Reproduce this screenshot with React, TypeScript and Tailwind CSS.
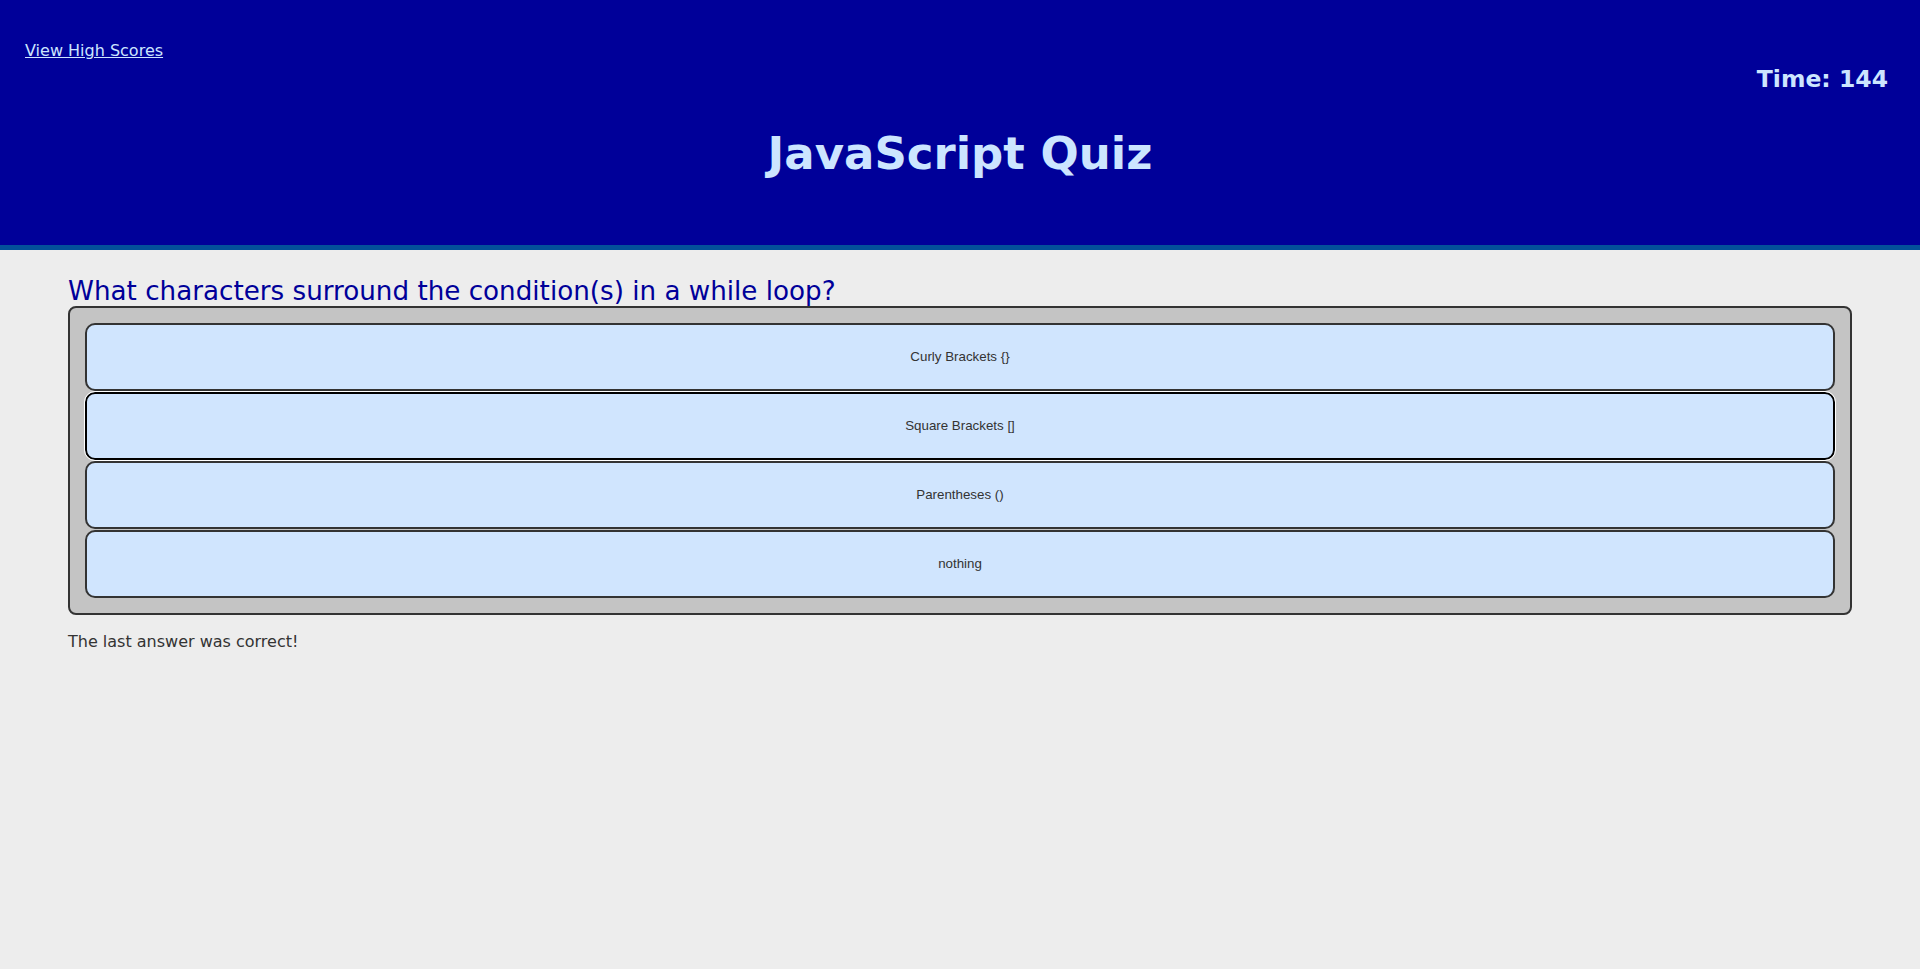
const answers = ["Curly Brackets {}", "Square Brackets []", "Parentheses ()", "nothing"];

function AnswerButton({ label, focused }: { label: string; focused?: boolean }) {
  return (
    <button
      className={
        focused
          ? "h-[68px] w-full rounded-[10px] border-2 border-black bg-[#d0e5fe] font-['Liberation_Sans',Arial,sans-serif] text-[13.333px] text-[#333] outline outline-1 outline-white"
          : "h-[68px] w-full rounded-[10px] border-2 border-[#333] bg-[#d0e5fe] font-['Liberation_Sans',Arial,sans-serif] text-[13.333px] text-[#333]"
      }
    >
      {label}
    </button>
  );
}

export default function App() {
  return (
    <div className="min-h-screen bg-[#ededed] font-['DejaVu_Sans',Verdana,sans-serif]">
      <header className="h-[250px] border-b-[5px] border-[#03509a] bg-[#000099] px-[25px] pt-[39px]">
        <a href="#" className="text-[16px] text-[#cce5ff] underline">
          View High Scores
        </a>
        <div className="-mt-[1px] pr-[7px] text-right text-[23.5px] font-bold text-[#cce5ff]">Time: 144</div>
        <h1 className="mt-[23px] text-center text-[45px] font-bold text-[#cce5ff]">JavaScript Quiz</h1>
      </header>

      <main className="px-[68px] pt-[26px]">
        <h2 className="text-[26.2px] leading-[30px] text-[#000099]">What characters surround the condition(s) in a while loop?</h2>
        <div className="flex flex-col gap-px rounded-[8px] border-2 border-[#333] bg-[#c4c4c4] px-[15px] pb-[15px] pt-[15px]">
          {answers.map((a, i) => (
            <AnswerButton key={a} label={a} focused={i === 1} />
          ))}
        </div>
        <p className="mt-[15px] text-[16px] text-[#333]">The last answer was correct!</p>
      </main>
    </div>
  );
}
